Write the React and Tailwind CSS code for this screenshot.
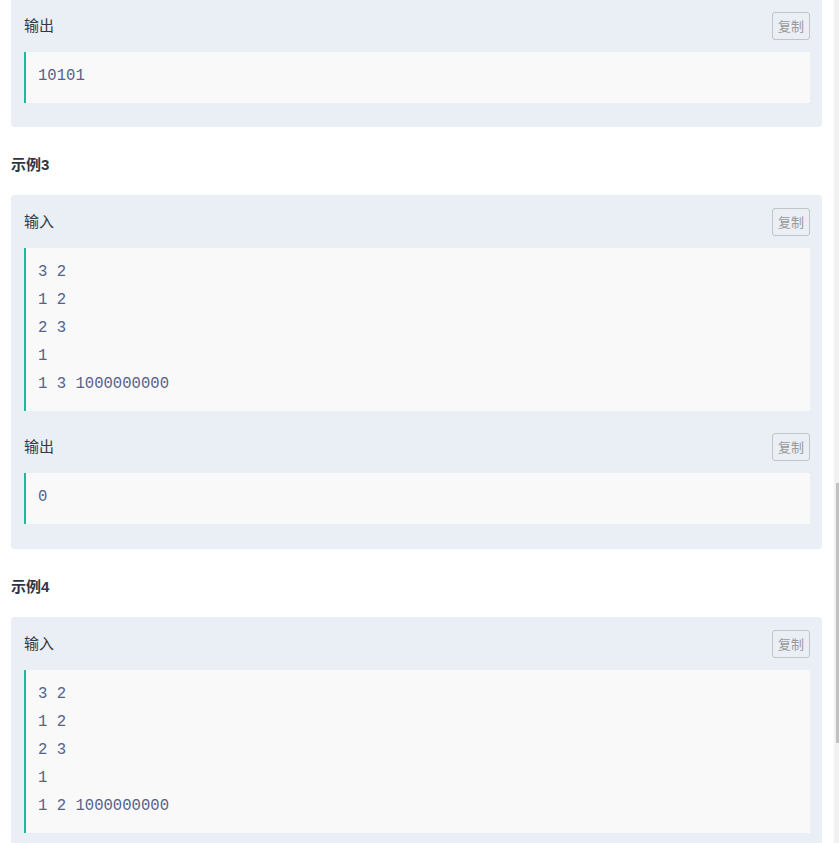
import React from "react";

const cjk = { fontFamily: '"Liberation Sans", "Noto Sans CJK SC", sans-serif' };

const CopyButton = () => (
  <button
    type="button"
    className="h-[28px] px-[5px] border border-[#c4c4c4] rounded-[3px] text-[13px] leading-none text-[#9a9a9a] bg-transparent"
  >
    复制
  </button>
);

const Section = ({ label, lines, first, top = "pt-[13px]" }) => (
  <div className={first ? "" : "pt-[9px]"}>
    <div className={`flex items-center justify-between h-[28px] box-content ${top} pb-[12px]`}>
      <span className="text-[15px] text-[#333a44]">{label}</span>
      <CopyButton />
    </div>
    <pre
      className="bg-[#f9f9f9] border-l-2 border-[#1abc9c] pl-[12px] pt-[10px] pb-[13px] text-[15.6px] leading-[28px] text-[#56628a] m-0"
      style={{ fontFamily: '"Liberation Mono", "Courier New", monospace' }}
    >
      {lines.join("\n")}
    </pre>
  </div>
);

const Card = ({ children, last, first }) => (
  <div
    className={`bg-[#eaeef5] ml-[11px] mr-[12px] px-[13px] pr-[12px] ${
      first ? "rounded-b-[4px] pb-[24px]" : last ? "rounded-t-[4px] pb-[24px]" : "rounded-[4px] pb-[25px]"
    }`}
  >
    {children}
  </div>
);

const Heading = ({ children }) => (
  <h3 className="ml-[11px] mt-[27px] mb-[19px] h-[22px] leading-[22px] text-[15px] font-bold text-[#2f3642]">
    {children}
  </h3>
);

export default function App() {
  return (
    <div className="flex w-[839px] h-[843px] overflow-hidden bg-white" style={cjk}>
      <div className="flex-1 flex flex-col">
        <div className="h-px bg-[#1e1f22]" />
        <Card first>
          <Section first top="pt-[12px]" label="输出" lines={["10101"]} />
        </Card>

        <Heading>示例3</Heading>
        <Card>
          <Section first label="输入" lines={["3 2", "1 2", "2 3", "1", "1 3 1000000000"]} />
          <Section label="输出" lines={["0"]} />
        </Card>

        <Heading>示例4</Heading>
        <Card last>
          <Section first label="输入" lines={["3 2", "1 2", "2 3", "1", "1 2 1000000000"]} />
        </Card>
      </div>
      <div className="w-[5px] bg-[#f1f1f1] flex flex-col">
        <div className="ml-[2px] mt-[483px] h-[260px] bg-[#c1c1c1]" />
      </div>
    </div>
  );
}
